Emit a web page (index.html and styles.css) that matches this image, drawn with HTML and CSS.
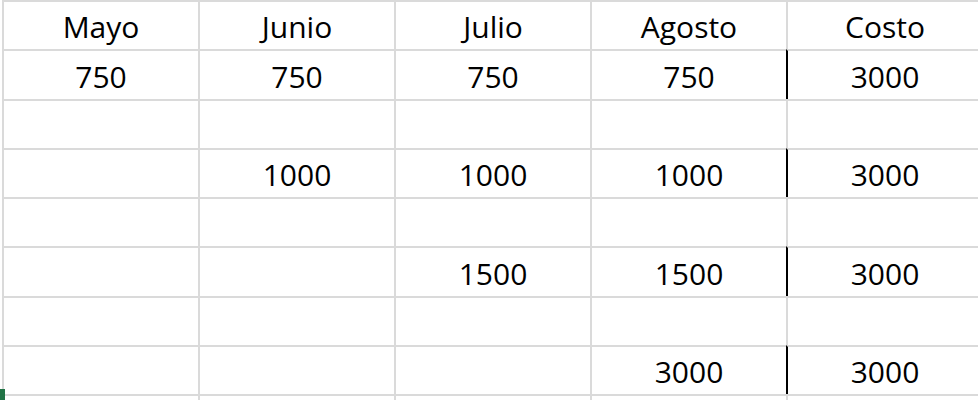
FILE: index.html
```html
<!DOCTYPE html>
<html lang="es">
<head>
<meta charset="utf-8">
<title>Hoja</title>
<link rel="stylesheet" href="styles.css">
</head>
<body>
<div class="sheet">
  <div class="cell">Mayo</div><div class="cell">Junio</div><div class="cell">Julio</div><div class="cell">Agosto</div><div class="cell">Costo</div>
  <div class="cell">750</div><div class="cell">750</div><div class="cell">750</div><div class="cell">750</div><div class="cell edge">3000</div>
  <div class="cell"></div><div class="cell"></div><div class="cell"></div><div class="cell"></div><div class="cell"></div>
  <div class="cell"></div><div class="cell">1000</div><div class="cell">1000</div><div class="cell">1000</div><div class="cell edge">3000</div>
  <div class="cell"></div><div class="cell"></div><div class="cell"></div><div class="cell"></div><div class="cell"></div>
  <div class="cell"></div><div class="cell"></div><div class="cell">1500</div><div class="cell">1500</div><div class="cell edge">3000</div>
  <div class="cell"></div><div class="cell"></div><div class="cell"></div><div class="cell"></div><div class="cell"></div>
  <div class="cell"></div><div class="cell"></div><div class="cell"></div><div class="cell">3000</div><div class="cell edge">3000</div>
  <div class="cell"></div><div class="cell"></div><div class="cell"></div><div class="cell"></div><div class="cell"></div>
</div>
<div class="handle"></div>
</body>
</html>
```
FILE: styles.css
```css
html, body {
  margin: 0;
  padding: 0;
  background: #ffffff;
  overflow: hidden;
}
body {
  width: 978px;
  height: 400px;
  position: relative;
  font-family: "Open Sans", "Liberation Sans", sans-serif;
  color: #000;
}
.sheet {
  display: grid;
  grid-template-columns: repeat(5, 196px);
  grid-auto-rows: 49.3px;
  margin-left: 2px;
  width: 976px;
  height: 400px;
  overflow: hidden;
}
.cell {
  border-left: 2px solid #dadada;
  border-top: 2px solid #dadada;
  display: flex;
  align-items: flex-end;
  justify-content: center;
  font-size: 30px;
  line-height: 30px;
  padding-bottom: 7px;
  box-sizing: border-box;
  overflow: hidden;
}
.cell.edge {
  border-left: 2px solid #000;
}
.handle {
  position: absolute;
  left: 0;
  top: 389px;
  width: 5px;
  height: 11px;
  background: #217346;
}
```
